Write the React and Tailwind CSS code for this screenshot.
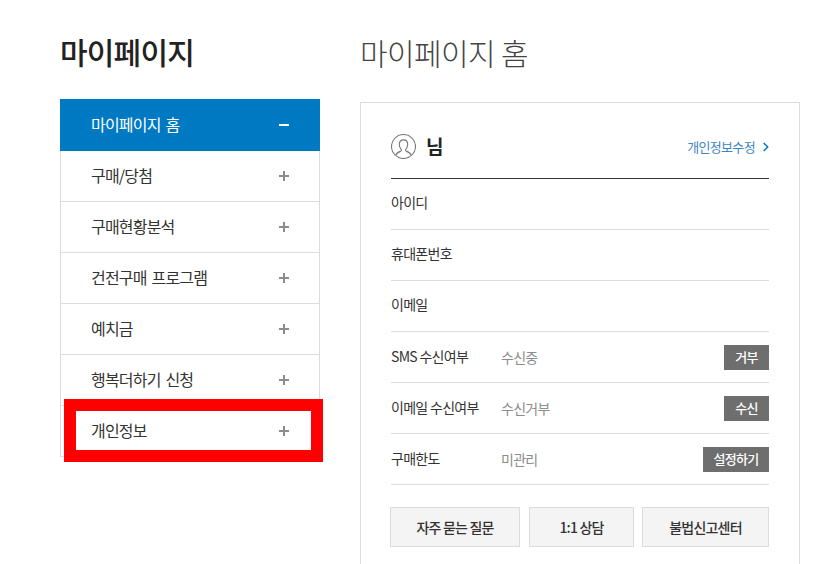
const MENU = ['구매/당첨', '구매현황분석', '건전구매 프로그램', '예치금', '행복더하기 신청', '개인정보']

const INFO = [
  { label: '아이디' },
  { label: '휴대폰번호' },
  { label: '이메일' },
  { label: 'SMS 수신여부', value: '수신중', action: '거부', width: 'w-[45px]' },
  { label: '이메일 수신여부', value: '수신거부', action: '수신', width: 'w-[45px]' },
  { label: '구매한도', value: '미관리', action: '설정하기', width: 'w-[66px]' },
]

function Sidebar() {
  return (
    <aside className="w-[260px] shrink-0">
      <h2 className="h-[83px] pt-[13px] text-[30px] leading-[44px] font-medium tracking-[-0.8px] text-[#222]">마이페이지</h2>
      <ul className="relative tracking-[-0.05em] [word-spacing:2px]">
        <li className="flex h-[52px] items-center justify-between bg-[#0079c3] pl-[31px] pr-[31px] text-[16px] text-white">
          <span className="pb-[2px]">마이페이지 홈</span>
          <span className="h-[2px] w-[10px] bg-white"></span>
        </li>
        {MENU.map((m) => (
          <li key={m} className="flex h-[51px] items-center justify-between border-x border-b border-[#dcdcdc] pl-[30px] pr-[30px] text-[16px] text-[#333]">
            <span className="pb-[2px]">{m}</span>
            <span className="relative h-[10px] w-[10px]">
              <span className="absolute left-0 top-[4px] h-[2px] w-[10px] bg-[#8c8c8c]"></span>
              <span className="absolute left-[4px] top-0 h-[10px] w-[2px] bg-[#8c8c8c]"></span>
            </span>
          </li>
        ))}
        {/* annotation box drawn over the last rows */}
        <div className="absolute left-[4px] top-[300px] h-[63px] w-[259px] border-[12px] border-[#ff0000]"></div>
      </ul>
    </aside>
  )
}

function UserIcon() {
  return (
    <svg width="25" height="25" viewBox="0 0 25 25" fill="none" stroke="#777" strokeWidth="1.1">
      <circle cx="12.5" cy="12.5" r="12" />
      <path d="M5 21c.6-2.4 2.6-3 4.6-3.7.8-.3 1-1 .7-1.7-1.2-1.3-2-3.1-2-5 0-2.8 1.8-4.7 4.2-4.7s4.2 1.9 4.2 4.7c0 1.9-.8 3.7-2 5-.3.7-.1 1.4.7 1.7 2 .7 4 1.3 4.6 3.7" />
    </svg>
  )
}

function InfoRow({ label, value, action, width }) {
  return (
    <div className="flex h-[51px] items-center border-b border-[#dcdcdc] text-[14px] tracking-[-0.05em]">
      <span className={`w-[110px] shrink-0 text-[#333] ${action ? 'pb-[2px]' : 'pb-[3px]'}`}>{label}</span>
      {value && <span className="pt-[1px] text-[#8c8c8c]">{value}</span>}
      {action && (
        <button className={`${width} ml-auto flex h-[25px] items-center justify-center bg-[#6e6e6e] pb-[1px] text-[13px] font-medium text-white`}>{action}</button>
      )}
    </div>
  )
}

function Content() {
  return (
    <main className="w-[440px] shrink-0">
      <h1 className="h-[86px] pt-[14px] text-[30px] leading-[44px] font-light tracking-[-0.6px] text-[#444]">마이페이지 홈</h1>
      <section className="border border-[#dcdcdc] px-[30px] pb-[40px] pt-[17px]">
        <div className="flex h-[59px] items-center justify-between border-b border-[#333] pb-[5px]">
          <div className="flex items-center gap-[10px]">
            <UserIcon />
            <span className="text-[19px] font-bold tracking-[-0.05em] text-[#222]">님</span>
          </div>
          <a className="flex items-center gap-[8px] text-[13px] tracking-[-0.05em] text-[#3d85c6]">
            개인정보수정
            <svg width="6" height="10" viewBox="0 0 6 10" fill="none" stroke="#0079c3" strokeWidth="1.5"><path d="M.7 1l4 4-4 4" /></svg>
          </a>
        </div>
        {INFO.map((row) => <InfoRow key={row.label} {...row} />)}
        <div className="-ml-[1px] flex pt-[22px] tracking-[-0.05em] [word-spacing:1px]">
          <button className="h-[40px] w-[130px] border border-[#dcdcdc] bg-[#f4f4f4] text-[14px] font-medium text-[#333]">자주 묻는 질문</button>
          <button className="ml-[9px] h-[40px] w-[105px] border border-[#dcdcdc] bg-[#f4f4f4] text-[14px] font-medium text-[#333]">1:1 상담</button>
          <button className="ml-[8px] h-[40px] w-[127px] border border-[#dcdcdc] bg-[#f4f4f4] text-[14px] font-medium text-[#333]">불법신고센터</button>
        </div>
      </section>
    </main>
  )
}

export default function App() {
  return (
    <div className="flex h-[564px] gap-[40px] overflow-hidden bg-white pl-[60px] pt-[16px] font-['Noto_Sans_CJK_KR','Noto_Sans',sans-serif]">
      <Sidebar />
      <Content />
    </div>
  )
}
